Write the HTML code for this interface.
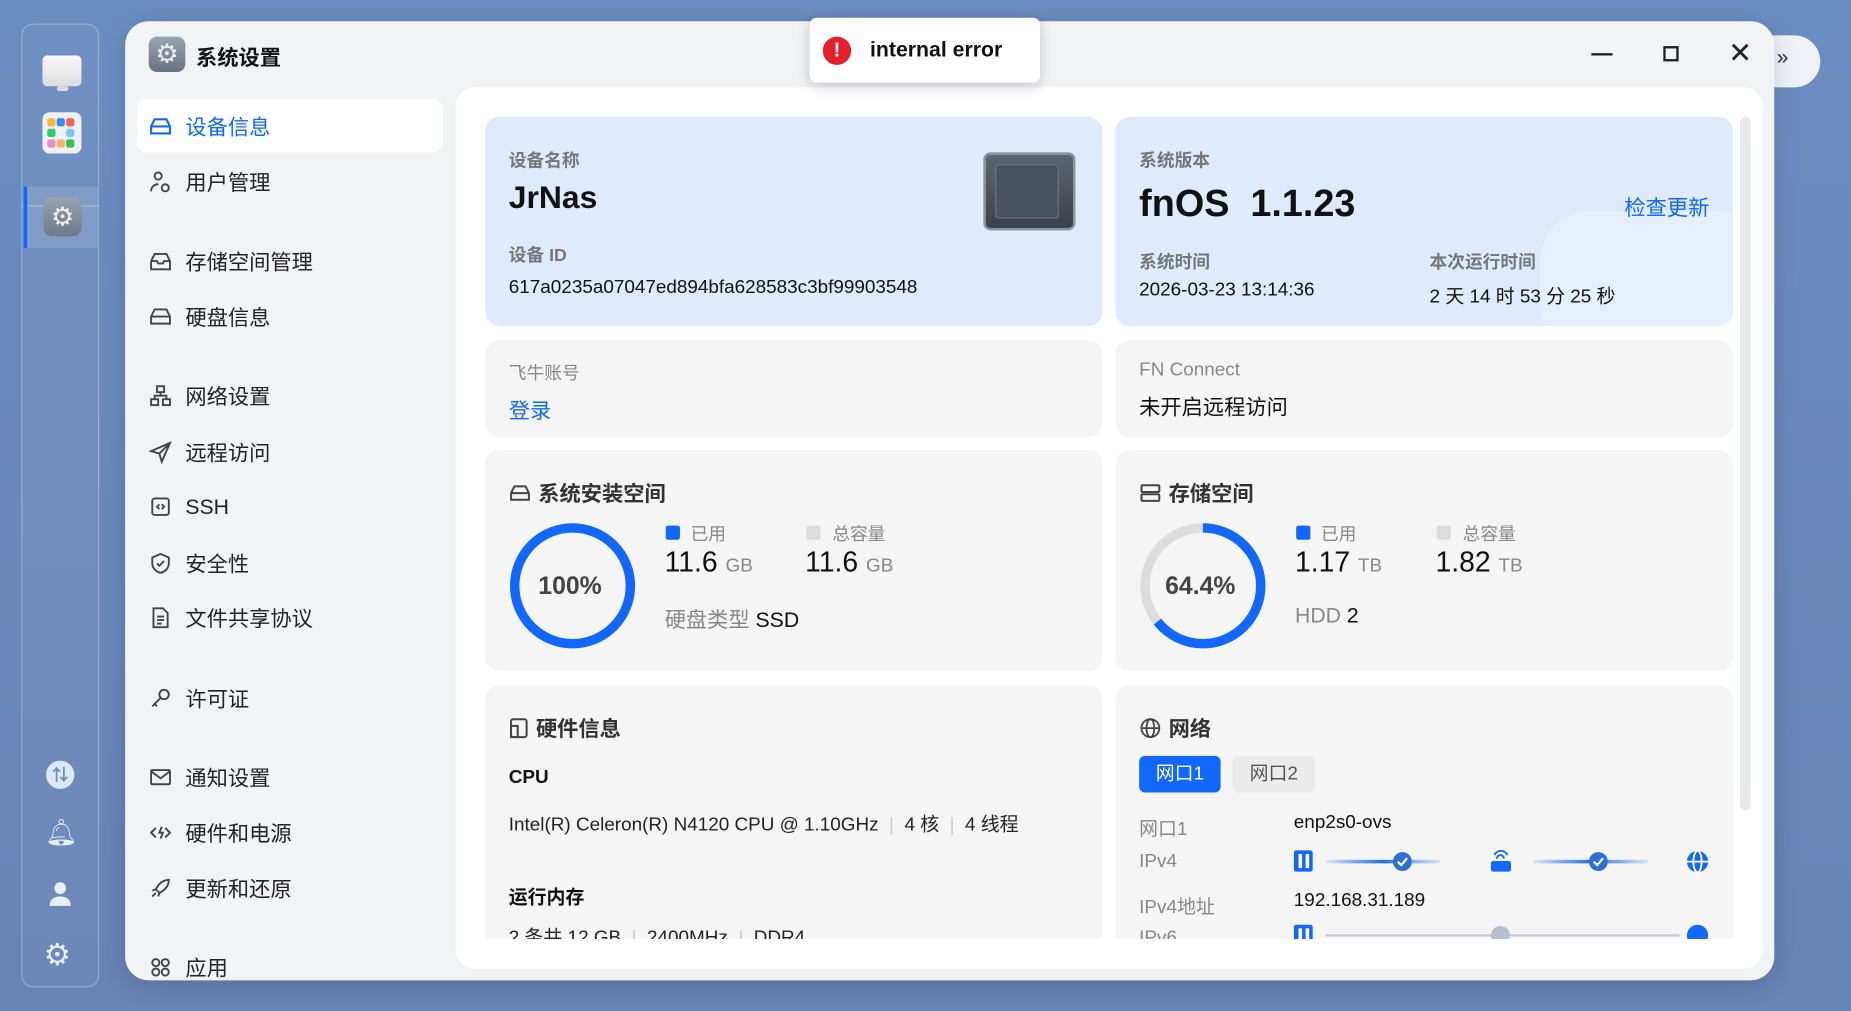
<!DOCTYPE html>
<html><head><meta charset="utf-8"><style>
*{margin:0;padding:0;box-sizing:border-box}
html,body{width:1851px;height:1011px;overflow:hidden;background:#6a8cbe}
#s{position:absolute;left:0;top:0;width:1568px;height:856px;transform:scale(1.18048,1.1811);transform-origin:0 0;font-family:"Liberation Sans","Noto Sans CJK SC",sans-serif;color:#111;background:linear-gradient(180deg,#6a8dc0,#6784b6)}
.a{position:absolute}
.t{position:absolute;white-space:nowrap}
.nav{position:absolute;left:126px;font-size:18px;color:#222;display:flex;align-items:center;gap:11px;height:24px}
.nav svg{width:20px;height:20px}
.card{position:absolute;border-radius:12px;background:#f5f5f5}
.lbl{font-size:15px;color:#777;font-weight:bold}
.h{font-size:18px;font-weight:bold;color:#333;display:flex;align-items:center;gap:6px}
.g{color:#888}
</style></head><body><div id="s">
<!-- behind window pill -->
<div class="a" style="left:1470px;top:30px;width:72px;height:44px;background:#eef1f6;border-radius:22px"></div>
<div class="t" style="left:1505px;top:38px;font-size:18px;color:#333">»</div>
<!-- dock -->
<div class="a" style="left:18px;top:20px;width:66px;height:816px;border:1px solid rgba(255,255,255,.25);border-radius:10px;background:rgba(255,255,255,.04)"></div>
<div class="a" style="left:36px;top:47px;width:33px;height:26px;background:linear-gradient(#fafafa,#ddd);border-radius:4px"></div>
<div class="a" style="left:48px;top:73px;width:10px;height:4px;background:#ddd;border-radius:2px"></div>
<div class="a" style="left:36px;top:95px;width:33px;height:35px;background:#eef1f5;border-radius:6px"></div>
<div class="a" style="left:40px;top:100px;width:7px;height:7px;background:#ffb739;border-radius:2px"></div><div class="a" style="left:48px;top:100px;width:7px;height:7px;background:#3b8df5;border-radius:2px"></div><div class="a" style="left:56px;top:100px;width:7px;height:7px;background:#f7644c;border-radius:2px"></div>
<div class="a" style="left:40px;top:109px;width:7px;height:7px;background:#2bcf6b;border-radius:2px"></div><div class="a" style="left:56px;top:109px;width:7px;height:7px;background:#78c9f6;border-radius:2px"></div>
<div class="a" style="left:40px;top:118px;width:7px;height:7px;background:#ee8ad2;border-radius:2px"></div><div class="a" style="left:48px;top:118px;width:7px;height:7px;background:#f3b46c;border-radius:2px"></div><div class="a" style="left:56px;top:118px;width:7px;height:7px;background:#33c25a;border-radius:2px"></div>
<div class="a" style="left:18px;top:174px;width:66px;height:1px;background:rgba(255,255,255,.3)"></div>
<div class="a" style="left:20px;top:158px;width:63px;height:52px;background:rgba(255,255,255,.12)"></div>
<div class="a" style="left:20px;top:158px;width:3px;height:52px;background:#1167ff"></div>
<div class="a" style="left:37px;top:167px;width:32px;height:33px;background:linear-gradient(#9aa3b1,#6f7887);border-radius:7px;color:#eee;font-size:22px;text-align:center;line-height:33px">⚙</div>
<div class="a" style="left:39px;top:644px;width:24px;height:24px;border-radius:12px;background:#dde6f3;color:#6a8cbe;font-size:14px;text-align:center;line-height:24px;font-weight:bold">⇅</div>
<div class="t" style="left:38px;top:692px;font-size:22px;color:#e8eef7">🔔︎</div>
<svg class="a" style="left:40px;top:746px" width="22" height="22" viewBox="0 0 22 22"><circle cx="11" cy="6" r="5" fill="#e8eef7"/><path d="M2 21c0-6 4-8 9-8s9 2 9 8z" fill="#e8eef7"/></svg>
<div class="t" style="left:37px;top:793px;font-size:26px;color:#e8eef7;line-height:30px">⚙</div>
<!-- main window -->
<div class="a" style="left:106px;top:18px;width:1397px;height:812px;background:#f2f3f5;border-radius:20px;box-shadow:0 4px 20px rgba(0,0,0,.15)"></div>
<div class="a" style="left:126px;top:31px;width:31px;height:30px;background:linear-gradient(#9aa3b1,#6a7382);border-radius:7px;color:#eee;font-size:22px;text-align:center;line-height:30px">⚙</div>
<div class="t" style="left:166px;top:35px;font-size:18px;font-weight:bold">系统设置</div>
<div class="a" style="left:1348px;top:45px;width:18px;height:2px;background:#222"></div>
<div class="a" style="left:1409px;top:39px;width:13px;height:13px;border:2px solid #222"></div>
<div class="t" style="left:1464px;top:31px;font-size:24px;color:#222">✕</div>
<!-- sidebar -->
<div class="a" style="left:116px;top:84px;width:259px;height:45px;background:#fff;border-radius:8px"></div>
<div class="nav" style="top:95px;color:#1167ff"><svg viewBox="0 0 20 20" fill="none" stroke="#1167ff" stroke-width="1.8"><path d="M2 10l3-6h10l3 6v6H2z M2 10h16"/></svg>设备信息</div>
<div class="nav" style="top:142px"><svg viewBox="0 0 20 20" fill="none" stroke="#444" stroke-width="1.6"><circle cx="8" cy="5" r="3"/><path d="M2 18c0-4 3-6 6-6"/><circle cx="14" cy="15" r="3"/></svg>用户管理</div>
<div class="nav" style="top:209px"><svg viewBox="0 0 20 20" fill="none" stroke="#444" stroke-width="1.6"><path d="M2 10l3-6h10l3 6v7H2z M2 10h5l1 2h4l1-2h5"/></svg>存储空间管理</div>
<div class="nav" style="top:256px"><svg viewBox="0 0 20 20" fill="none" stroke="#444" stroke-width="1.6"><path d="M2 10l3-6h10l3 6v6H2z M2 10h16"/></svg>硬盘信息</div>
<div class="nav" style="top:323px"><svg viewBox="0 0 20 20" fill="none" stroke="#444" stroke-width="1.6"><rect x="7" y="2" width="6" height="5"/><rect x="2" y="13" width="6" height="5"/><rect x="12" y="13" width="6" height="5"/><path d="M10 7v3M5 13v-3h10v3"/></svg>网络设置</div>
<div class="nav" style="top:371px"><svg viewBox="0 0 20 20" fill="none" stroke="#444" stroke-width="1.6"><path d="M18 2L2 9l7 2 2 7z M9 11l9-9"/></svg>远程访问</div>
<div class="nav" style="top:417px"><svg viewBox="0 0 20 20" fill="none" stroke="#444" stroke-width="1.6"><rect x="3" y="3" width="14" height="14" rx="2"/><path d="M9 8l-2 2 2 2M11 8l2 2-2 2"/></svg>SSH</div>
<div class="nav" style="top:465px"><svg viewBox="0 0 20 20" fill="none" stroke="#444" stroke-width="1.6"><path d="M10 2l7 3v5c0 4-3 7-7 8-4-1-7-4-7-8V5z M7 10l2 2 4-4"/></svg>安全性</div>
<div class="nav" style="top:511px"><svg viewBox="0 0 20 20" fill="none" stroke="#444" stroke-width="1.6"><path d="M4 2h8l4 4v12H4z M7 9h6M7 12h6M7 15h4"/></svg>文件共享协议</div>
<div class="nav" style="top:579px"><svg viewBox="0 0 20 20" fill="none" stroke="#444" stroke-width="1.6"><circle cx="13" cy="7" r="4"/><path d="M10 10l-7 7M5 15l2 2"/></svg>许可证</div>
<div class="nav" style="top:646px"><svg viewBox="0 0 20 20" fill="none" stroke="#444" stroke-width="1.6"><rect x="2" y="4" width="16" height="12" rx="1"/><path d="M2 5l8 6 8-6"/></svg>通知设置</div>
<div class="nav" style="top:693px"><svg viewBox="0 0 20 20" fill="none" stroke="#444" stroke-width="1.6"><path d="M6 6L2 10l4 4M14 6l4 4-4 4M11 5l-2 5h3l-2 5"/></svg>硬件和电源</div>
<div class="nav" style="top:740px"><svg viewBox="0 0 20 20" fill="none" stroke="#444" stroke-width="1.6"><path d="M17 3c-6 0-9 4-11 8l3 3c4-2 8-5 8-11z M6 11l-3 1 M9 14l-1 3 M3 17l3-3"/></svg>更新和还原</div>
<div class="nav" style="top:807px"><svg viewBox="0 0 20 20" fill="none" stroke="#444" stroke-width="1.6"><circle cx="6" cy="6" r="3"/><circle cx="14" cy="6" r="3"/><circle cx="6" cy="14" r="3"/><circle cx="14" cy="14" r="3"/></svg>应用</div>
<!-- content panel -->
<div class="a" style="left:386px;top:74px;width:1107px;height:746px;background:#fff;border-radius:16px;overflow:hidden">
<div class="a" style="left:1088px;top:25px;width:9px;height:587px;background:#e8e9ea;border-radius:5px"></div>
<div class="a" style="left:0;top:0;width:1107px;height:721px;overflow:hidden">
 <!-- row1 left -->
 <div class="card" style="left:25px;top:25px;width:523px;height:177px;background:#dfebfd">
  <div class="t lbl" style="left:20px;top:26px">设备名称</div>
  <div class="t" style="left:20px;top:53px;font-size:27px;font-weight:bold">JrNas</div>
  <div class="t lbl" style="left:20px;top:106px">设备 ID</div>
  <div class="t" style="left:20px;top:136px;font-size:16px">617a0235a07047ed894bfa628583c3bf99903548</div>
  <div class="a" style="left:422px;top:30px;width:78px;height:66px;background:linear-gradient(#5d6570,#3b424b);border-radius:6px;border:2px solid #8a929c"></div>
  <div class="a" style="left:432px;top:40px;width:54px;height:46px;background:#4a525d;border:1px solid #6b737e;border-radius:3px"></div>
 </div>
 <!-- row1 right -->
 <div class="card" style="left:559px;top:25px;width:523px;height:177px;background:#dfebfd;overflow:hidden">
  <div class="a" style="left:360px;top:80px;width:190px;height:120px;border-radius:40px;background:rgba(255,255,255,.22)"></div>
  <div class="t lbl" style="left:20px;top:26px">系统版本</div>
  <div class="t" style="left:20px;top:55px;font-size:32px;font-weight:bold">fnOS&nbsp; 1.1.23</div>
  <div class="t" style="left:431px;top:63px;font-size:18px;color:#1167ff">检查更新</div>
  <div class="t lbl" style="left:20px;top:112px">系统时间</div>
  <div class="t" style="left:20px;top:138px;font-size:16px">2026-03-23 13:14:36</div>
  <div class="t lbl" style="left:266px;top:112px">本次运行时间</div>
  <div class="t" style="left:266px;top:138px;font-size:16px">2 天 14 时 53 分 25 秒</div>
 </div>
 <!-- row2 -->
 <div class="card" style="left:25px;top:214px;width:523px;height:82px">
  <div class="t" style="left:20px;top:17px;font-size:15px;color:#888">飞牛账号</div>
  <div class="t" style="left:20px;top:46px;font-size:18px;color:#1167ff">登录</div>
 </div>
 <div class="card" style="left:559px;top:214px;width:523px;height:82px">
  <div class="t" style="left:20px;top:17px;font-size:16px;color:#888">FN Connect</div>
  <div class="t" style="left:20px;top:43px;font-size:18px">未开启远程访问</div>
 </div>
 <!-- row3 -->
 <div class="card" style="left:25px;top:307px;width:523px;height:187px">
  <div class="t h" style="left:20px;top:23px"><svg width="19" height="17" viewBox="0 0 20 18" fill="none" stroke="#444" stroke-width="1.8"><path d="M2 9l3-6h10l3 6v6H2z M2 9h16"/></svg>系统安装空间</div>
  <svg class="a" style="left:20px;top:61px" width="108" height="108"><circle cx="54" cy="54" r="49" fill="none" stroke="#1167ff" stroke-width="8"/></svg>
  <div class="t" style="left:45px;top:104px;font-size:21px;font-weight:bold;color:#444">100%</div>
  <div class="a" style="left:153px;top:64px;width:12px;height:12px;background:#1167ff;border-radius:2px"></div>
  <div class="t" style="left:174px;top:60px;font-size:15px;color:#888">已用</div>
  <div class="t" style="left:152px;top:82px;font-size:24px">11.6 <span style="font-size:16px;color:#888">GB</span></div>
  <div class="a" style="left:272px;top:64px;width:12px;height:12px;background:#ddd;border-radius:2px"></div>
  <div class="t" style="left:294px;top:60px;font-size:15px;color:#888">总容量</div>
  <div class="t" style="left:271px;top:82px;font-size:24px">11.6 <span style="font-size:16px;color:#888">GB</span></div>
  <div class="t" style="left:152px;top:130px;font-size:18px"><span class="g">硬盘类型</span> SSD</div>
 </div>
 <div class="card" style="left:559px;top:307px;width:523px;height:187px">
  <div class="t h" style="left:20px;top:23px"><svg width="19" height="17" viewBox="0 0 20 18" fill="none" stroke="#444" stroke-width="1.8"><rect x="2" y="2" width="16" height="6" rx="1"/><rect x="2" y="10" width="16" height="6" rx="1"/></svg>存储空间</div>
  <svg class="a" style="left:20px;top:61px" width="108" height="108"><circle cx="54" cy="54" r="49" fill="none" stroke="#ddd" stroke-width="8"/><circle cx="54" cy="54" r="49" fill="none" stroke="#1167ff" stroke-width="8" stroke-dasharray="198.1 400" transform="rotate(-90 54 54)"/></svg>
  <div class="t" style="left:42px;top:104px;font-size:21px;font-weight:bold;color:#444">64.4%</div>
  <div class="a" style="left:153px;top:64px;width:12px;height:12px;background:#1167ff;border-radius:2px"></div>
  <div class="t" style="left:174px;top:60px;font-size:15px;color:#888">已用</div>
  <div class="t" style="left:152px;top:82px;font-size:24px">1.17 <span style="font-size:16px;color:#888">TB</span></div>
  <div class="a" style="left:272px;top:64px;width:12px;height:12px;background:#ddd;border-radius:2px"></div>
  <div class="t" style="left:294px;top:60px;font-size:15px;color:#888">总容量</div>
  <div class="t" style="left:271px;top:82px;font-size:24px">1.82 <span style="font-size:16px;color:#888">TB</span></div>
  <div class="t" style="left:152px;top:130px;font-size:18px"><span class="g">HDD</span> 2</div>
 </div>
 <!-- row4 -->
 <div class="card" style="left:25px;top:506px;width:523px;height:240px">
  <div class="t h" style="left:20px;top:23px"><svg width="17" height="19" viewBox="0 0 18 20" fill="none" stroke="#444" stroke-width="1.8"><rect x="2" y="2" width="14" height="16" rx="2"/><rect x="2" y="8" width="6" height="10"/></svg>硬件信息</div>
  <div class="t" style="left:20px;top:70px;font-size:16px;font-weight:bold">CPU</div>
  <div class="t" style="left:20px;top:104px;font-size:16px;color:#222">Intel(R) Celeron(R) N4120 CPU @ 1.10GHz <span style="color:#ccc">&nbsp;|&nbsp;</span> 4 核 <span style="color:#ccc">&nbsp;|&nbsp;</span> 4 线程</div>
  <div class="t" style="left:20px;top:166px;font-size:16px;font-weight:bold">运行内存</div>
  <div class="t" style="left:20px;top:200px;font-size:16px;color:#222">2 条共 12 GB <span style="color:#ccc">&nbsp;|&nbsp;</span> 2400MHz <span style="color:#ccc">&nbsp;|&nbsp;</span> DDR4</div>
 </div>
 <div class="card" style="left:559px;top:506px;width:523px;height:240px">
  <div class="t h" style="left:20px;top:23px"><svg width="19" height="19" viewBox="0 0 20 20" fill="none" stroke="#444" stroke-width="1.6"><circle cx="10" cy="10" r="8"/><ellipse cx="10" cy="10" rx="3.5" ry="8"/><path d="M2 10h16"/></svg>网络</div>
  <div class="a" style="left:20px;top:60px;width:69px;height:31px;background:#1167ff;border-radius:5px;color:#fff;font-size:16px;text-align:center;line-height:31px">网口1</div>
  <div class="a" style="left:99px;top:60px;width:70px;height:31px;background:#ebebeb;border-radius:5px;color:#555;font-size:16px;text-align:center;line-height:31px">网口2</div>
  <div class="t" style="left:20px;top:108px;font-size:16px;color:#888">网口1</div>
  <div class="t" style="left:151px;top:108px;font-size:16px">enp2s0-ovs</div>
  <div class="t" style="left:20px;top:141px;font-size:16px;color:#888">IPv4</div>
  <div class="t" style="left:20px;top:174px;font-size:16px;color:#888">IPv4地址</div>
  <div class="t" style="left:151px;top:174px;font-size:16px">192.168.31.189</div>
  <div class="t" style="left:20px;top:206px;font-size:16px;color:#888">IPv6</div>
  <svg class="a" style="left:151px;top:138px" width="353" height="90" viewBox="0 0 353 90">
   <defs><linearGradient id="l" x1="0" x2="1"><stop offset="0" stop-color="#1167ff" stop-opacity=".1"/><stop offset=".5" stop-color="#2d6fd8"/><stop offset="1" stop-color="#1167ff" stop-opacity=".1"/></linearGradient></defs>
   <rect x="0" y="2" width="16" height="18" rx="2" fill="#1167ff"/><rect x="4" y="5" width="3" height="12" fill="#fff"/><rect x="10" y="5" width="3" height="12" fill="#fff"/>
   <rect x="27" y="10" width="97" height="3" fill="url(#l)"/>
   <circle cx="92" cy="11.5" r="8" fill="#2d6fd8"/><path d="M88 11.5l3 3 5-6" stroke="#fff" stroke-width="1.8" fill="none"/>
   <rect x="167" y="11" width="17" height="9" rx="2" fill="#1167ff"/><path d="M170 6a6 6 0 0 1 11 0M172 9a3 3 0 0 1 6 0" stroke="#1167ff" stroke-width="1.6" fill="none"/>
   <rect x="203" y="10" width="97" height="3" fill="url(#l)"/>
   <circle cx="258" cy="11.5" r="8" fill="#2d6fd8"/><path d="M254 11.5l3 3 5-6" stroke="#fff" stroke-width="1.8" fill="none"/>
   <circle cx="342" cy="11.5" r="9" fill="#1167ff"/><ellipse cx="342" cy="11.5" rx="3.5" ry="9" fill="none" stroke="#fff" stroke-width="1.5"/><path d="M333 11.5h18" stroke="#fff" stroke-width="1.5"/>
   <rect x="0" y="65" width="16" height="18" rx="2" fill="#1167ff"/><rect x="4" y="68" width="3" height="12" fill="#fff"/><rect x="10" y="68" width="3" height="12" fill="#fff"/>
   <rect x="27" y="73" width="300" height="2" fill="#c5cdd8"/><circle cx="175" cy="74" r="8" fill="#b3c0d0"/>
   <circle cx="342" cy="74" r="9" fill="#1167ff"/>
  </svg>
 </div>
</div>
</div>
<!-- toast -->
<div class="a" style="left:686px;top:15px;width:195px;height:55px;background:#fff;border-radius:6px;box-shadow:0 3px 12px rgba(0,0,0,.18)"></div>
<div class="a" style="left:697px;top:31px;width:24px;height:24px;background:#e5202e;border-radius:12px;color:#fff;font-weight:bold;font-size:17px;text-align:center;line-height:24px">!</div>
<div class="t" style="left:737px;top:32px;font-size:18px;font-weight:bold;color:#111">internal error</div>
</div></body></html>
